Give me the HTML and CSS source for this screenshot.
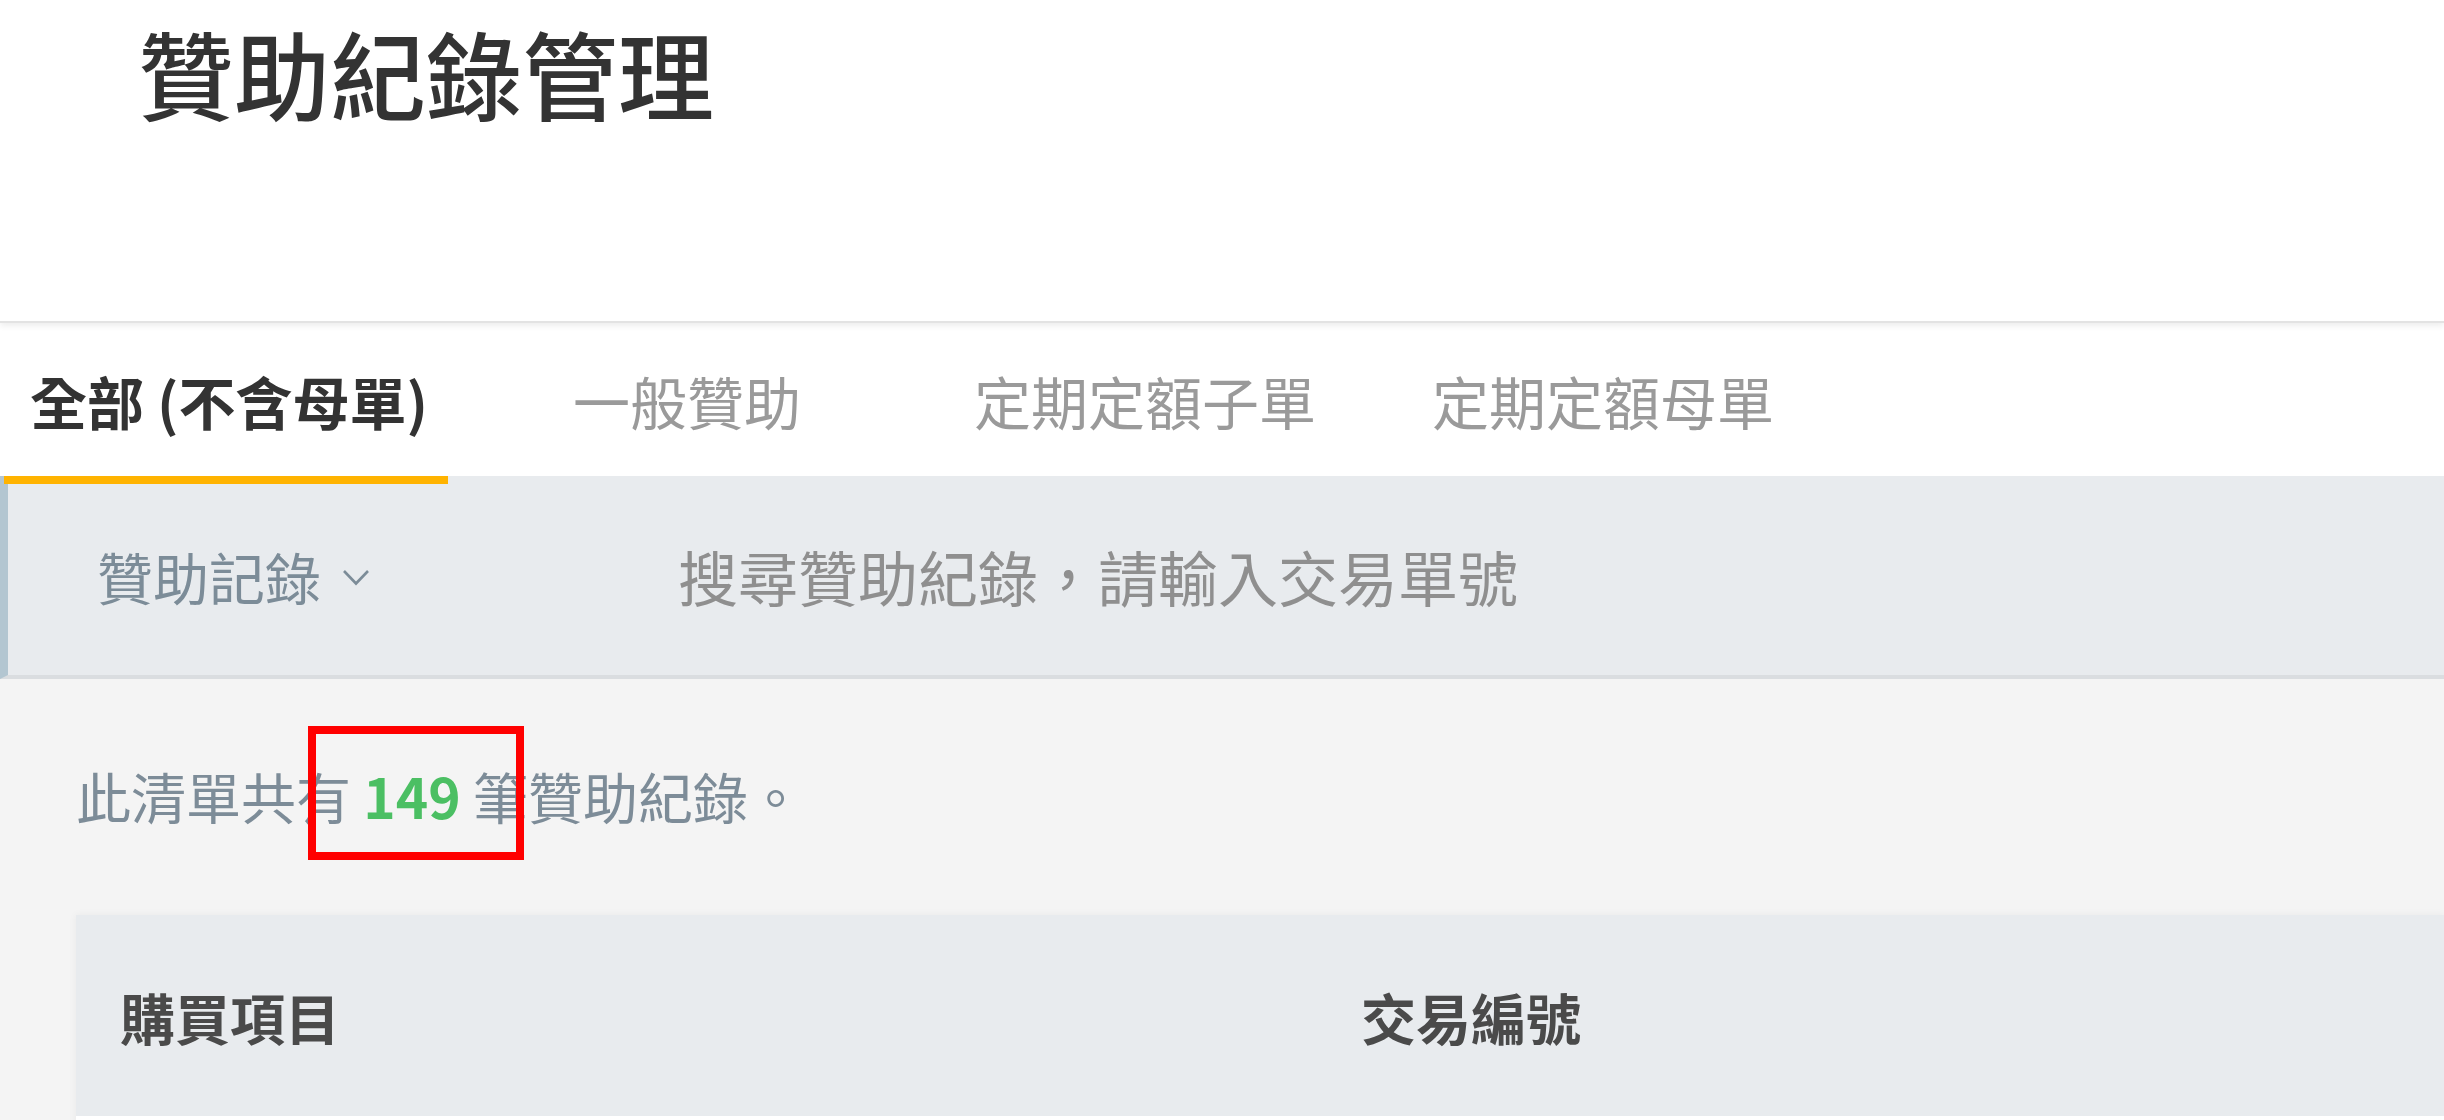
FILE: index.html
```html
<!DOCTYPE html>
<html lang="zh-Hant">
<head>
    <meta charset="UTF-8">
    <meta name="viewport" content="width=device-width, initial-scale=1.0">
    <title>贊助紀錄管理</title>
    <link rel="stylesheet" href="styles.css">
</head>
<body>
    <header class="page-header">
        <h1 class="page-title">贊助紀錄管理</h1>
    </header>

    <nav class="tabs">
        <a class="tab active">全部 (不含母單)</a>
        <a class="tab">一般贊助</a>
        <a class="tab">定期定額子單</a>
        <a class="tab">定期定額母單</a>
    </nav>

    <div class="search-bar">
        <div class="search-type">
            贊助記錄
            <svg class="chevron" width="28" height="17" viewBox="0 0 28 17">
                <polyline points="2,2 14,14.5 26,2" fill="none" stroke="#7c8c98" stroke-width="2.6"/>
            </svg>
        </div>
        <input class="search-input" type="text" placeholder="搜尋贊助紀錄，請輸入交易單號">
    </div>

    <main class="content">
        <p class="count">此清單共有 <span class="count-num">149</span> 筆贊助紀錄。</p>

        <div class="table">
            <div class="table-head">
                <div class="col-item">購買項目</div>
                <div class="col-id">交易編號</div>
            </div>
            <div class="table-row"></div>
        </div>
    </main>

    <!-- highlight box around the count -->
    <div class="highlight"></div>
</body>
</html>
```

FILE: styles.css
```css
body {
    margin: 0;
    font-family: "Noto Sans CJK TC", "Noto Sans", sans-serif;
    background-color: #f4f4f4;
    overflow: hidden;
}
.page-header {
    position: relative;
    z-index: 1;
    height: 321px;
    background: white;
    border-bottom: 2px solid #e3e3e3;
    box-shadow: 0 3px 6px rgba(0,0,0,0.07);
}
.page-title {
    margin: 0;
    padding: 14px 0 0 138px;
    font-size: 96px;
    line-height: 116px;
    font-weight: 500;
    color: #333;
}
.tabs {
    display: flex;
    height: 153px;
    background: white;
}
.tab {
    position: relative;
    width: 458px;
    display: flex;
    align-items: center;
    justify-content: center;
    font-size: 57px;
    color: #9a9a9a;
}
.tab.active {
    color: #333;
    font-weight: bold;
}
.tab.active::after {
    content: "";
    position: absolute;
    left: 4px;
    right: 10px;
    bottom: -8px;
    height: 8px;
    background: #ffb300;
    z-index: 1;
}
.search-bar {
    display: flex;
    align-items: center;
    height: 199px;
    background: #e8ebee;
    border-left: 8px solid #b3c6d1;
    border-bottom: 4px solid #dadde0;
}
.search-type {
    box-sizing: border-box;
    width: 670px;
    padding-left: 89px;
    display: flex;
    align-items: center;
    gap: 21px;
    font-size: 56px;
    color: #7c8c98;
}
.chevron {
    margin-top: 4px;
}
.search-input {
    flex: 1;
    border: none;
    background: transparent;
    outline: none;
    padding: 0;
    font-family: "Noto Sans CJK TC", "Noto Sans", sans-serif;
    font-size: 60px;
    color: #333;
}
.search-input::placeholder {
    color: #8f8f8f;
}
.content {
    padding: 76px 0 0 76px;
}
.count {
    margin: 0;
    font-size: 55px;
    line-height: 80px;
    color: #7d8c98;
}
.count-num {
    color: #4bbf63;
    font-weight: bold;
}
.table {
    margin-top: 80px;
    box-shadow: 0 0 8px rgba(0,0,0,0.05);
}
.table-head {
    display: grid;
    grid-template-columns: 1241px 1fr;
    align-items: center;
    height: 201px;
    padding-left: 44px;
    background: #e8ebee;
    font-size: 55px;
    font-weight: bold;
    color: #4a4a4a;
}
.table-row {
    height: 120px;
    background: white;
}
.highlight {
    position: absolute;
    left: 308px;
    top: 726px;
    width: 200px;
    height: 118px;
    border: 8px solid #ff0000;
}
```
